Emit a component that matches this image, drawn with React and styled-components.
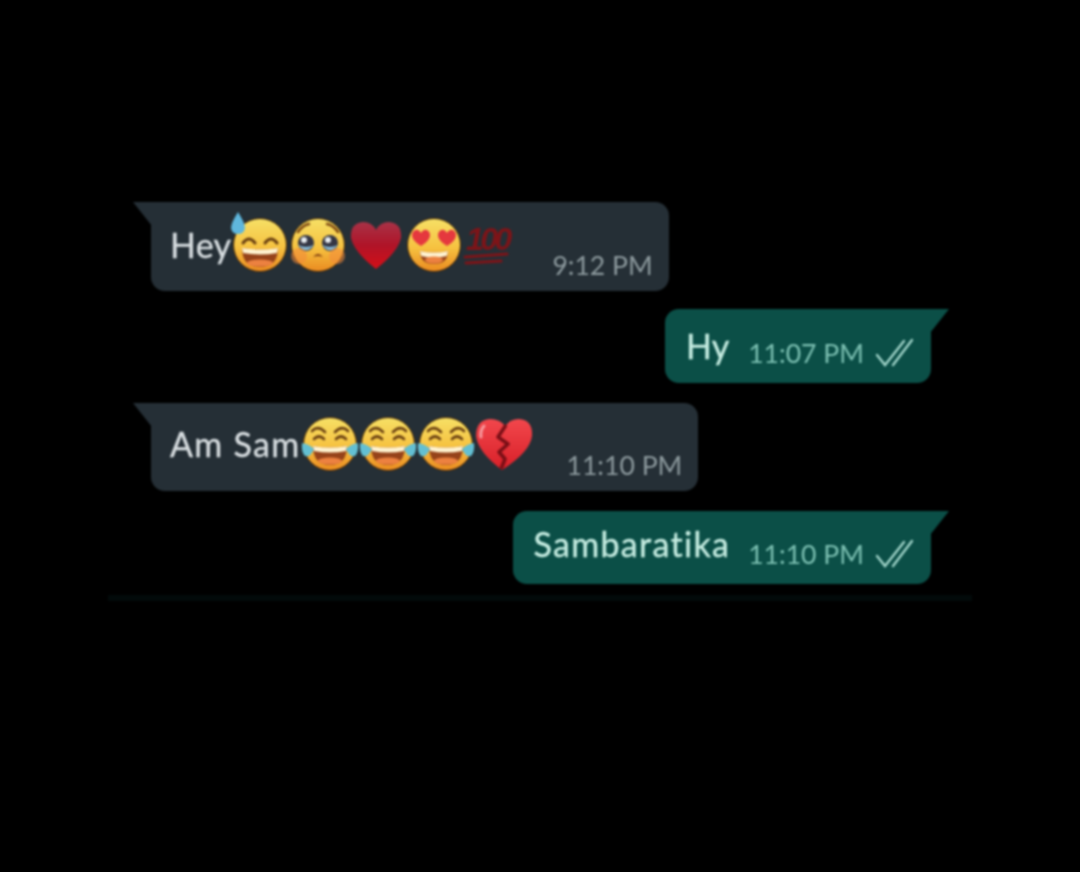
import React, { useId } from 'react'
import styled, { createGlobalStyle } from 'styled-components'

const GlobalStyle = createGlobalStyle`
  html, body {
    margin: 0;
    padding: 0;
    background: #000;
  }
  body {
    font-family: "Lato", "Open Sans", sans-serif;
  }
`

const Screen = styled.div`
  width: 1080px;
  height: 872px;
  box-sizing: border-box;
  padding: 202px 131px 0 151px;
  background: #000;
  overflow: hidden;
  filter: blur(0.9px);
`

const Thread = styled.div`
  display: flex;
  flex-direction: column;
  align-items: flex-start;
`

const Bubble = styled.div`
  position: relative;
  display: flex;
  align-self: ${p => (p.$out ? 'flex-end' : 'flex-start')};
  box-sizing: border-box;
  height: ${p => p.$h}px;
  margin-right: ${p => (p.$out ? 18 : 0)}px;
  margin-bottom: ${p => p.$after}px;
  padding: ${p => (p.$out ? '0 18px 0 21px' : '0 16px 0 19px')};
  border-radius: ${p => (p.$out ? '14px 0 14px 14px' : '0 14px 14px 14px')};
  background: ${p => (p.$out ? '#0b4f47' : '#252f36')};

  &::before {
    content: '';
    position: absolute;
    top: 0;
    ${p => (p.$out ? 'right: -18px;' : 'left: -18px;')}
    width: 19px;
    height: 24px;
    background: inherit;
    clip-path: ${p =>
      p.$out ? 'polygon(0 0, 100% 0, 0 100%)' : 'polygon(0 0, 100% 0, 100% 100%)'};
  }
`

const Message = styled.div`
  display: flex;
  align-items: center;
  height: 58px;
  margin-top: ${p => p.$top}px;
  font-size: 34px;
  line-height: 58px;
  letter-spacing: ${p => p.$spacing || 0}px;
  -webkit-text-stroke: 0.4px currentColor;
  color: ${p => (p.$out ? '#c4ebe0' : '#d6dcdf')};
  white-space: nowrap;
`

const EmojiSlot = styled.svg`
  display: block;
  flex: none;
  width: 58px;
  height: 58px;
  overflow: visible;
`

const Meta = styled.div`
  display: flex;
  align-items: center;
  align-self: flex-start;
  gap: 11px;
  height: 30px;
  margin-top: ${p => p.$top}px;
  margin-left: ${p => p.$gap}px;
  font-size: 26.6px;
  line-height: 30px;
  color: ${p => (p.$out ? '#7cc0b2' : '#8d9a9e')};
  white-space: nowrap;
`

const Ticks = styled.svg`
  display: block;
  width: 38px;
  height: 30px;
`

const Rule = styled.div`
  width: 864px;
  height: 6px;
  margin: 11px 0 0 -43px;
  background: #020a0a;
`

function Face({ children }) {
  const id = useId()
  return (
    <>
      <defs>
        <linearGradient id={id} x1="0" y1="0" x2="0" y2="1">
          <stop offset="0" stopColor="#f6e066" />
          <stop offset="0.55" stopColor="#f6c240" />
          <stop offset="1" stopColor="#ea8a20" />
        </linearGradient>
      </defs>
      <circle cx="29" cy="29" r="26.5" fill={`url(#${id})`} stroke="#4a2a08" strokeWidth="1" />
      {children}
    </>
  )
}

function OpenMouth({ y = 33, wide = 15, deep = 17 }) {
  return (
    <>
      <path
        d={`M${29 - wide} ${y}Q29 ${y + 3} ${29 + wide} ${y}Q${29 + wide} ${y + deep} 29 ${y + deep}Q${29 - wide} ${y + deep} ${29 - wide} ${y}Z`}
        fill="#96431a"
      />
      <path
        d={`M${29 - wide} ${y}Q29 ${y + 3} ${29 + wide} ${y}L${29 + wide - 1} ${y + 5}Q29 ${y + 8} ${29 - wide + 1} ${y + 5}Z`}
        fill="#fff3d0"
      />
      <ellipse cx="29" cy={y + deep - 4} rx={wide - 5} ry="3.5" fill="#ec8140" />
    </>
  )
}

function ArcEyes({ y = 22 }) {
  return (
    <g fill="none" stroke="#6a4012" strokeWidth="3" strokeLinecap="round">
      <path d={`M12 ${y + 3}Q18 ${y - 5} 24 ${y + 3}`} />
      <path d={`M34 ${y + 3}Q40 ${y - 5} 46 ${y + 3}`} />
    </g>
  )
}

function SweatGrin() {
  return (
    <EmojiSlot viewBox="0 0 58 58">
      <Face>
        <ArcEyes y={24} />
        <OpenMouth y={32} wide={18} deep={19} />
      </Face>
      <path d="M7 -4Q0 7 0 12Q1 18 7 18Q13 18 14 12Q14 7 7 -4Z" fill="#5fb7dd" />
    </EmojiSlot>
  )
}

function Pleading() {
  return (
    <EmojiSlot viewBox="0 0 58 58">
      <Face>
        <g fill="none" stroke="#7a4512" strokeWidth="2.5" strokeLinecap="round">
          <path d="M9 16Q14 9 20 8" />
          <path d="M49 16Q44 9 38 8" />
        </g>
        <circle cx="17" cy="27" r="8" fill="#343644" />
        <circle cx="41" cy="27" r="8" fill="#343644" />
        <circle cx="15" cy="24" r="3" fill="#e8edf2" />
        <circle cx="39" cy="24" r="3" fill="#e8edf2" />
        <path d="M9 29Q17 39 25 29Q17 33 9 29Z" fill="#8bc1e0" />
        <path d="M33 29Q41 39 49 29Q41 33 33 29Z" fill="#8bc1e0" />
        <path d="M24 41Q29 35 34 41Q29 39 24 41Z" fill="#7a3a10" />
        <circle cx="10" cy="40" r="8" fill="#f38a3a" opacity="0.55" />
        <circle cx="48" cy="40" r="8" fill="#f38a3a" opacity="0.55" />
      </Face>
    </EmojiSlot>
  )
}

function RedHeart() {
  const id = useId()
  return (
    <EmojiSlot viewBox="0 0 58 58">
      <defs>
        <linearGradient id={id} x1="0" y1="0" x2="0" y2="1">
          <stop offset="0" stopColor="#a83247" />
          <stop offset="0.5" stopColor="#b01428" />
          <stop offset="1" stopColor="#d40f17" />
        </linearGradient>
      </defs>
      <path
        d="M29 53Q7 36 4 22Q3 7 16 6Q25 6 29 14Q33 6 42 6Q55 7 54 22Q51 36 29 53Z"
        fill={`url(#${id})`}
      />
    </EmojiSlot>
  )
}

function SmallHeart({ x, y }) {
  return (
    <path
      transform={`translate(${x} ${y})`}
      d="M0 9Q-10 3 -9 -3Q-7 -8 -3 -7Q-1 -6 0 -4Q1 -6 3 -7Q7 -8 9 -3Q10 3 0 9Z"
      fill="#e5383e"
    />
  )
}

function HeartEyes() {
  return (
    <EmojiSlot viewBox="0 0 58 58">
      <Face>
        <SmallHeart x={16} y={21} />
        <SmallHeart x={42} y={21} />
        <OpenMouth y={35} wide={14} deep={13} />
      </Face>
    </EmojiSlot>
  )
}

function Hundred() {
  return (
    <EmojiSlot viewBox="0 0 58 58">
      <text
        x="3"
        y="34"
        fontFamily="Liberation Sans, sans-serif"
        fontStyle="italic"
        fontWeight="bold"
        fontSize="32"
        fill="#7d1418"
        letterSpacing="-3.5"
      >
        100
      </text>
      <g fill="none" stroke="#7d1418" strokeWidth="3" strokeLinecap="round">
        <path d="M2 41L44 38" />
        <path d="M3 47L38 45" />
      </g>
    </EmojiSlot>
  )
}

function Joy() {
  return (
    <EmojiSlot viewBox="0 0 58 58">
      <Face>
        <g fill="none" stroke="#6a4012" strokeWidth="2.6" strokeLinecap="round">
          <path d="M11 16Q17 10 24 17" />
          <path d="M34 17Q41 10 47 16" />
          <path d="M13 24Q18 19 23 24" />
          <path d="M35 24Q40 19 45 24" />
        </g>
        <OpenMouth y={31} wide={17} deep={19} />
      </Face>
      <path d="M1 28Q8 29 13 34Q9 43 4 41Q0 37 1 28Z" fill="#63bfd2" />
      <path d="M57 28Q50 29 45 34Q49 43 54 41Q58 37 57 28Z" fill="#63bfd2" />
    </EmojiSlot>
  )
}

function BrokenHeart() {
  const id = useId()
  return (
    <EmojiSlot viewBox="0 0 58 58">
      <defs>
        <linearGradient id={id} x1="0" y1="0" x2="0" y2="1">
          <stop offset="0" stopColor="#f2474c" />
          <stop offset="1" stopColor="#d81f28" />
        </linearGradient>
      </defs>
      <path
        d="M27 55Q3 37 1 21Q1 5 15 4Q25 4 30 11Q35 4 44 4Q58 5 57 21Q55 37 27 55Z"
        fill={`url(#${id})`}
      />
      <path
        d="M31 10L23 22L33 29L24 37L30 44L26 54"
        fill="none"
        stroke="#7a0f16"
        strokeWidth="3.6"
        strokeLinejoin="round"
      />
      <path d="M9 11Q5 15 6 22" fill="none" stroke="#f79a9e" strokeWidth="3" strokeLinecap="round" />
    </EmojiSlot>
  )
}

function DoubleTick() {
  return (
    <Ticks viewBox="0 0 38 30" fill="none" stroke="#9fd3c8" strokeWidth="2.4" strokeLinecap="round">
      <path d="M2 17L10 27L29 3" />
      <path d="M18 27L37 2" />
    </Ticks>
  )
}

export default function App() {
  return (
    <Screen>
      <GlobalStyle />
      <Thread>
        <Bubble $h={89} $after={18}>
          <Message $top={14} $spacing={0.3}>
            Hey
            <SweatGrin />
            <Pleading />
            <RedHeart />
            <HeartEyes />
            <Hundred />
          </Message>
          <Meta $gap={31} $top={48}>9:12 PM</Meta>
        </Bubble>
        <Bubble $out $h={74} $after={20}>
          <Message $out $top={8}>Hy</Message>
          <Meta $out $gap={19} $top={29}>
            11:07 PM
            <DoubleTick />
          </Meta>
        </Bubble>
        <Bubble $h={88} $after={20}>
          <Message $top={12} $spacing={1.3}>
            Am Sam
            <Joy />
            <Joy />
            <Joy />
            <BrokenHeart />
          </Message>
          <Meta $gap={34} $top={47}>11:10 PM</Meta>
        </Bubble>
        <Bubble $out $h={73} $after={0}>
          <Message $out $top={4} $spacing={1.3}>Sambaratika</Message>
          <Meta $out $gap={18} $top={28}>
            11:10 PM
            <DoubleTick />
          </Meta>
        </Bubble>
        <Rule />
      </Thread>
    </Screen>
  )
}
